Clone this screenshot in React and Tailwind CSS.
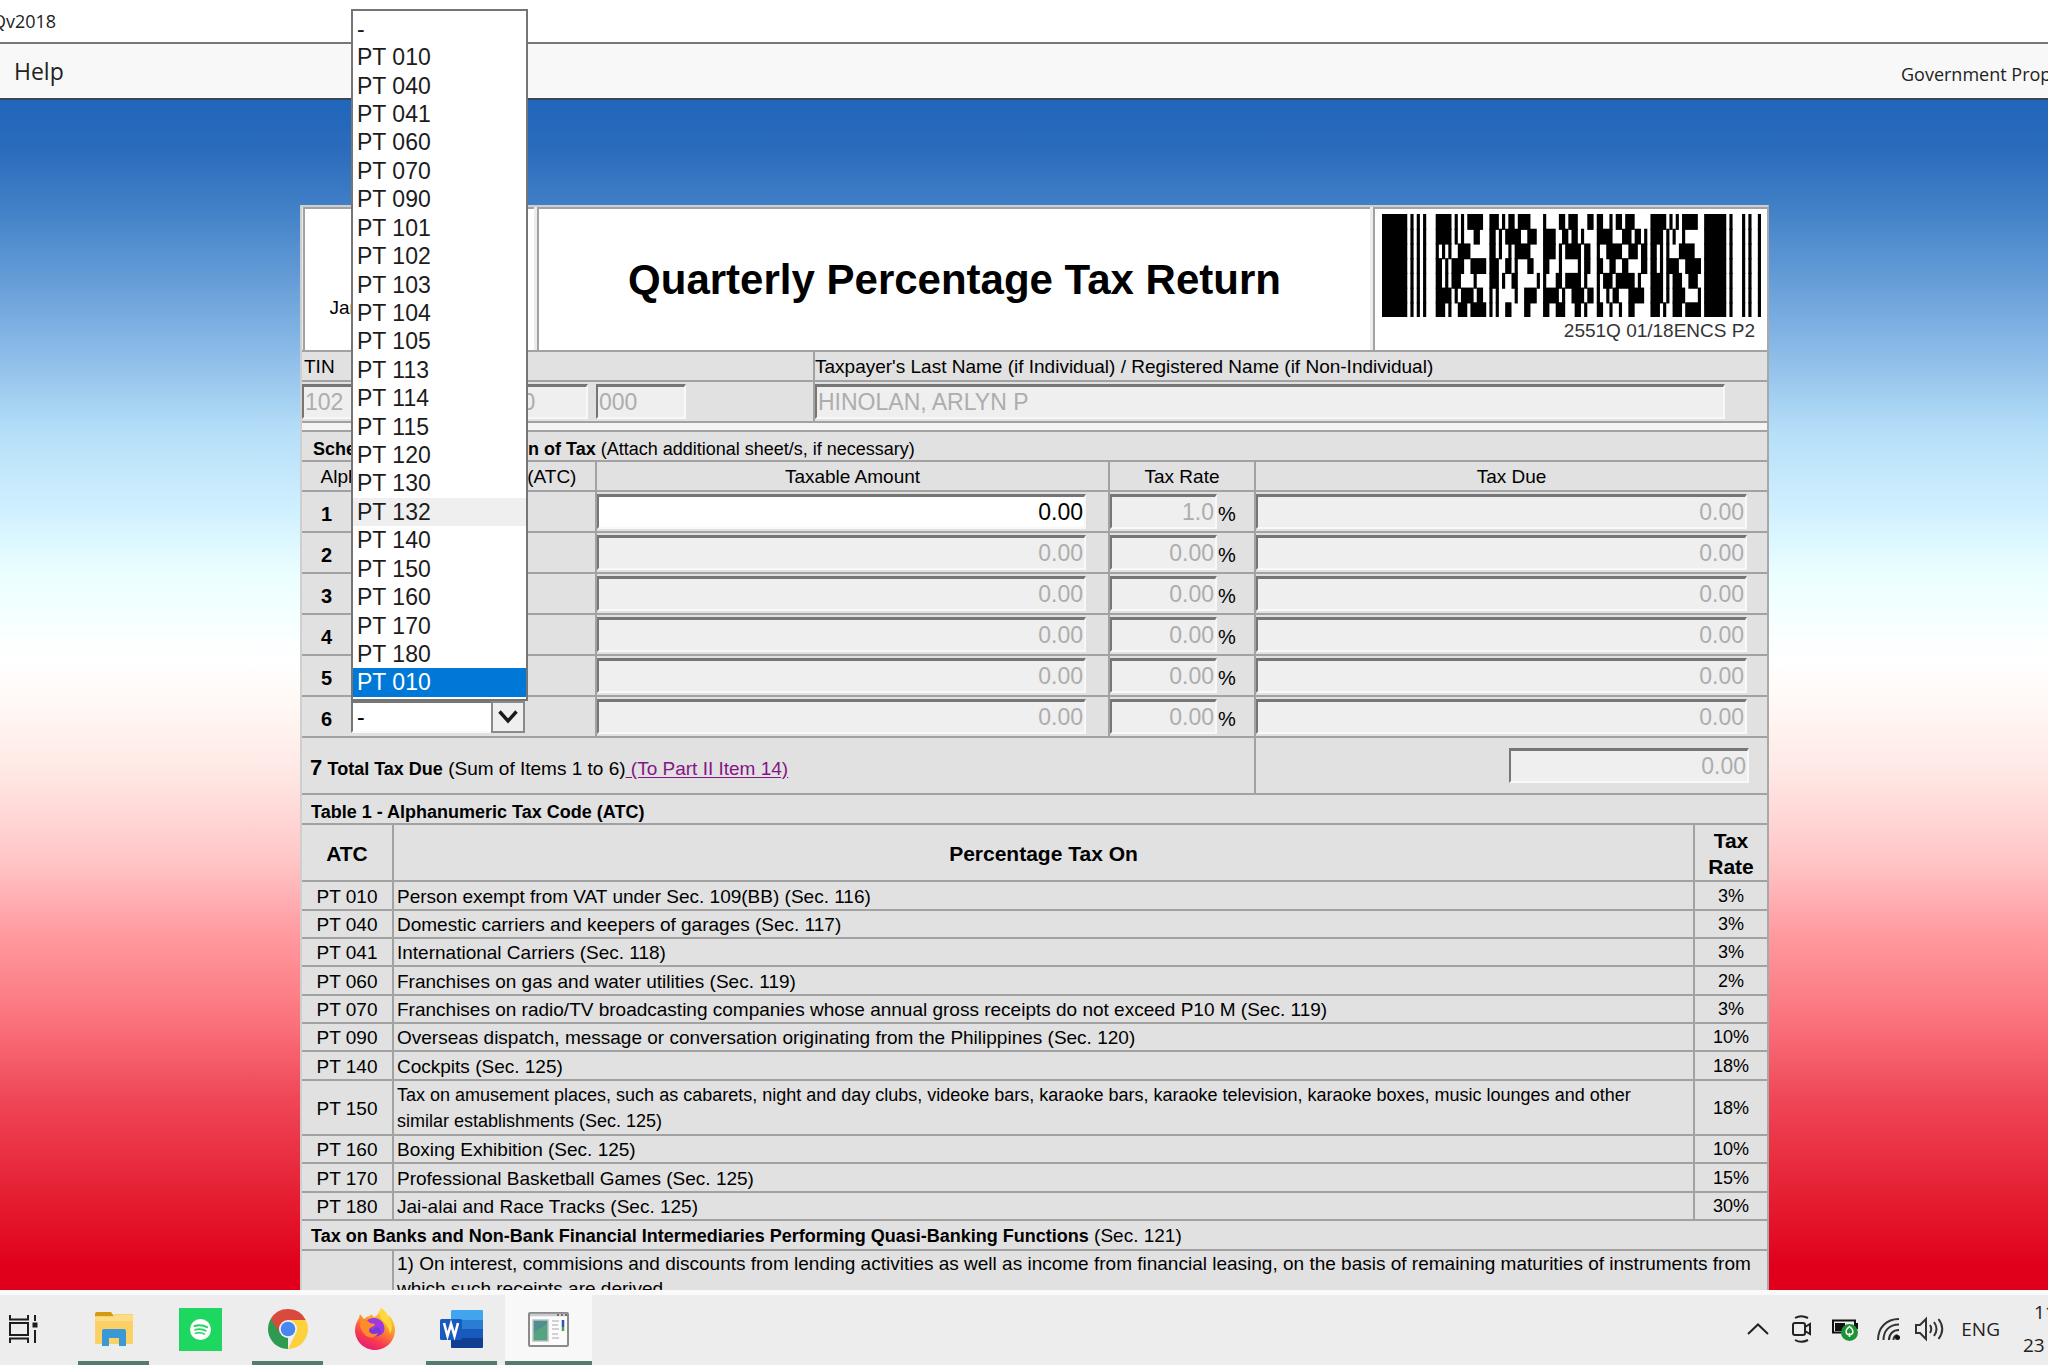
import React from "react";

const CODES = [
  "-", "PT 010", "PT 040", "PT 041", "PT 060", "PT 070", "PT 090", "PT 101", "PT 102", "PT 103", "PT 104", "PT 105",
  "PT 113", "PT 114", "PT 115", "PT 120", "PT 130", "PT 132", "PT 140", "PT 150", "PT 160", "PT 170", "PT 180", "PT 010",
];

const RATES = [
  ["PT 010", "Person exempt from VAT under Sec. 109(BB) (Sec. 116)", "3%"],
  ["PT 040", "Domestic carriers and keepers of garages (Sec. 117)", "3%"],
  ["PT 041", "International Carriers (Sec. 118)", "3%"],
  ["PT 060", "Franchises on gas and water utilities (Sec. 119)", "2%"],
  ["PT 070", "Franchises on radio/TV broadcasting companies whose annual gross receipts do not exceed P10 M (Sec. 119)", "3%"],
  ["PT 090", "Overseas dispatch, message or conversation originating from the Philippines (Sec. 120)", "10%"],
  ["PT 140", "Cockpits (Sec. 125)", "18%"],
  [
    "PT 150",
    <span className="text-[18px]">
      Tax on amusement places, such as cabarets, night and day clubs, videoke bars, karaoke bars, karaoke television, karaoke boxes, music lounges and other
      <br />
      similar establishments (Sec. 125)
    </span>,
    "18%",
  ],
  ["PT 160", "Boxing Exhibition (Sec. 125)", "10%"],
  ["PT 170", "Professional Basketball Games (Sec. 125)", "15%"],
  ["PT 180", "Jai-alai and Race Tracks (Sec. 125)", "30%"],
];

// PDF417 symbol: run lengths, alternating bar and space, for each of the seven rows.
const START = "81111113";
const STOP = "711311121";
const BARCODE = [
  ["51111152", "31112144", "14213321", "22112135", "51111152"],
  ["51111323", "21115232", "42212114", "53312111", "41111216"],
  ["11111246", "21121154", "41115122", "12523121", "21111353"],
  ["21114251", "32211323", "23151122", "22222421", "21114251"],
  ["21113414", "31122611", "13215113", "11316113", "41113232"],
  ["51114122", "11151242", "51124121", "12112352", "41114411"],
  ["31123151", "11122424", "22332113", "22121225", "31123151"],
];

function Barcode() {
  const bars = [];
  BARCODE.forEach((words, row) => {
    let x = 0;
    [START, ...words, STOP].forEach((word) => {
      word.split("").forEach((n, i) => {
        const w = Number(n);
        if (i % 2 === 0) bars.push(<rect key={row + "-" + x} x={x} y={row} width={w} height={row < 6 ? 1.08 : 1} />);
        x += w;
      });
    });
  });
  return (
    <svg viewBox="0 0 120 7" preserveAspectRatio="none" className="block h-[103px] w-full" fill="#000" role="img" aria-label="Form barcode">
      {bars}
    </svg>
  );
}

const field =
  "block h-[35px] rounded-none border-2 border-t-[3px] border-t-[#767676] border-l-[#767676] border-r-[#f8f8f8] border-b-[#f8f8f8] px-px text-[23px] leading-[28px] outline-none disabled:bg-[#efefef] disabled:text-[#adadad]";

const line = "border-b-2 border-[#a2a2a2]";
const cell = "border-b-2 border-l-2 border-[#a2a2a2] p-0";

function CodeSelect({ row, open }) {
  return (
    <div className="relative h-8 w-[174px]">
      <select
        aria-label={"Alphanumeric tax code " + row}
        defaultValue="-"
        className="block h-full w-full appearance-none border-2 border-t-[#767676] border-r-[#f8f8f8] border-b-[#f8f8f8] border-l-[#767676] bg-white pl-1 text-[23px] leading-[26px] outline-none"
      >
        <option>-</option>
        {CODES.slice(1, 23).map((c) => <option key={c}>{c}</option>)}
      </select>
      <span className="pointer-events-none absolute inset-y-0 right-0 flex w-[34px] items-center justify-center border-2 border-[#8a8a8a] bg-[#efefef]">
        <svg viewBox="0 0 20 14" className="h-[14px] w-5" fill="none" stroke="#1a1a1a" strokeWidth="3.4"><path d="M1.5 1.5 10 11l8.5-9.5" /></svg>
      </span>
      {open && (
        <ul
          role="listbox"
          aria-label="Tax codes"
          className="absolute bottom-full left-0 z-20 flex h-[692px] w-[177px] flex-col border-2 border-[#757575] bg-white pt-1 pb-0.5 text-[23px] leading-[26px] text-[#1c1c1c]"
        >
          {CODES.map((c, i) => (
            <li
              key={i}
              role="option"
              aria-selected={i === 23}
              className={
                "flex flex-1 items-center pl-1 " + (i === 23 ? "bg-[#0078d7] text-white" : i === 17 ? "bg-[#efefef]" : "")
              }
            >
              {c}
            </li>
          ))}
        </ul>
      )}
    </div>
  );
}

function Form() {
  return (
    <form className="mt-[105px] mr-[279px] ml-[300px] border-2 border-[#cfcfcf] border-r-[#a8a8a8] bg-[#e1e1e1] text-[19px] text-black">
      <header className={"grid h-[145px] grid-cols-[231px_1fr_394px] gap-[3px] bg-[#ececec] pl-px " + line}>
        <div className="flex flex-col items-center justify-end border-t-2 border-l-2 border-[#a2a2a2] bg-white pb-7">
          <span className="w-[180px]">January 2018</span>
        </div>
        <div className="flex items-center justify-center border-t-2 border-l-2 border-[#a2a2a2] bg-white">
          <h1 className="text-[42px] leading-[48px] font-bold">Quarterly Percentage Tax Return</h1>
        </div>
        <div className="border-t-2 border-l-2 border-[#a2a2a2] bg-white pt-[5px] pr-1.5 pl-[7px]">
          <Barcode />
          <p className="pr-1.5 text-right leading-[28px] text-[#333]">2551Q 01/18ENCS P2</p>
        </div>
      </header>

      <div className={"grid h-[30px] grid-cols-[511px_1fr] leading-[30px] " + line}>
        <label htmlFor="tin1" className="pl-0.5">TIN</label>
        <label htmlFor="payer" className="border-l-2 border-[#a2a2a2]">Taxpayer's Last Name (if Individual) / Registered Name (if Non-Individual)</label>
      </div>
      <div className={"grid h-[41px] grid-cols-[511px_1fr] " + line}>
        <div className="flex items-center gap-2">
          <input id="tin1" disabled defaultValue="102" className={field + " w-[88px]"} />
          <input aria-label="TIN part 2" disabled defaultValue="" className={field + " w-[88px]"} />
          <input aria-label="TIN part 3" disabled defaultValue="000" className={field + " w-[94px]"} />
          <input aria-label="TIN branch code" disabled defaultValue="000" className={field + " w-[90px]"} />
        </div>
        <div className="flex items-center border-l-2 border-[#a2a2a2] pr-[42px]">
          <input id="payer" disabled defaultValue="HINOLAN, ARLYN P" className={field + " w-full"} />
        </div>
      </div>
      <div className={"h-[9px] bg-[#f4f4f4] " + line} />
      <h2 className={"h-[30px] pl-[11px] text-[18px] leading-[34px] " + line}>
        <b>Schedule 1 – Computation of Tax</b> (Attach additional sheet/s, if necessary)
      </h2>

      <table className="w-full table-fixed border-separate border-spacing-0">
        <colgroup>
          <col className="w-[293px]" />
          <col />
          <col className="w-[146px]" />
          <col />
        </colgroup>
        <thead>
          <tr className="h-[30px] leading-[26px]">
            <th className={"p-0 pt-0.5 font-normal " + line}>Alphanumeric Tax Code (ATC)</th>
            <th className={cell + " pt-0.5 font-normal"}>Taxable Amount</th>
            <th className={cell + " pt-0.5 font-normal"}>Tax Rate</th>
            <th className={cell + " pt-0.5 font-normal"}>Tax Due</th>
          </tr>
        </thead>
        <tbody>
          {[1, 2, 3, 4, 5, 6].map((n) => (
            <tr key={n} className="h-[41px]">
              <td className={"p-0 " + line}>
                <div className="flex items-center">
                  <b className="w-[49px] pt-1 text-center text-[20px]">{n}</b>
                  <CodeSelect row={n} open={n === 6} />
                </div>
              </td>
              <td className={cell + " pr-[22px]"}>
                <input aria-label={"Taxable amount " + n} disabled={n > 1} defaultValue="0.00" className={field + " w-full bg-white text-right"} />
              </td>
              <td className={cell}>
                <div className="flex items-center gap-px">
                  <input aria-label={"Tax rate " + n} disabled defaultValue={n === 1 ? "1.0" : "0.00"} className={field + " w-[107px] text-right"} />
                  <span className="pt-1 text-[20px]">%</span>
                </div>
              </td>
              <td className={cell + " pr-5"}>
                <input aria-label={"Tax due " + n} disabled defaultValue="0.00" className={field + " w-full text-right"} />
              </td>
            </tr>
          ))}
          <tr className="h-[57px]">
            <td colSpan={3} className={"p-0 pt-1 pl-2 " + line}>
              <b className="text-[22px]">7</b> <b className="text-[18px]">Total Tax Due</b> (Sum of Items 1 to 6)
              <a href="#item14" className="text-[#851585] underline underline-offset-2"> (To Part II Item 14)</a>
            </td>
            <td className={cell + " pr-[18px]"}>
              <input aria-label="Total tax due" disabled defaultValue="0.00" className={field + " ml-auto w-[240px] text-right"} />
            </td>
          </tr>
        </tbody>
      </table>

      <h2 className={"h-[30px] pl-[9px] text-[18px] leading-[34px] font-bold " + line}>Table 1 - Alphanumeric Tax Code (ATC)</h2>
      <table className="w-full table-fixed border-separate border-spacing-0 leading-[25px]">
        <colgroup>
          <col className="w-[90px]" />
          <col />
          <col className="w-[74px]" />
        </colgroup>
        <thead>
          <tr className="h-[57px] text-[21px] leading-[26px]">
            <th className={"p-0 pt-0.5 " + line}>ATC</th>
            <th className={cell + " pt-0.5"}>Percentage Tax On</th>
            <th className={cell + " pt-0.5"}>Tax Rate</th>
          </tr>
        </thead>
        <tbody>
          {RATES.map(([code, text, rate]) => (
            <tr key={code} className="h-[28px] nth-[3n+1]:h-[29px]">
              <td className={"p-0 pt-px text-center " + line}>{code}</td>
              <td className={cell + " pt-px pl-[3px]"}>{text}</td>
              <td className={cell + " pt-px text-center text-[18px]"}>{rate}</td>
            </tr>
          ))}
          <tr className="h-[30px]">
            <td colSpan={3} className={"p-0 pt-0.5 pl-[9px] " + line}>
              <b className="text-[18px]">Tax on Banks and Non-Bank Financial Intermediaries Performing Quasi-Banking Functions</b> (Sec. 121)
            </td>
          </tr>
          <tr>
            <td className={"p-0 " + line} />
            <td colSpan={2} className={cell + " pl-[3px]"}>
              1) On interest, commisions and discounts from lending activities as well as income from financial leasing, on the basis of remaining maturities of instruments from which such receipts are derived
            </td>
          </tr>
        </tbody>
      </table>
    </form>
  );
}

function Folder() {
  return (
    <svg viewBox="0 0 40 36" className="h-9 w-10">
      <path d="M1 3q0-2 2-2h14l3 4H1z" fill="#d39b12" />
      <path d="M1 5h18l2-2h18v29q0 1-1 1H1z" fill="#fbd064" />
      <path d="M1 6h18l2-2h18v6H1z" fill="#fddc86" />
      <path d="M8 35V20q0-2 2-2h20q2 0 2 2v15h-7v-8H15v8z" fill="#3b98d6" />
    </svg>
  );
}

function Spotify() {
  return (
    <svg viewBox="0 0 43 43" className="h-[43px] w-[43px]">
      <path d="M0 0h43v43H0z" fill="#1ed760" />
      <circle cx="21.500" cy="21.500" r="10.500" fill="#fff" />
      <g fill="none" stroke="#1ed760" strokeLinecap="round" strokeWidth="2">
        <path d="M15.500 18q7-2 12.500 1.200" />
        <path d="M16 21.800q6-1.700 10.800 1" strokeWidth="1.700" />
        <path d="M16.500 25.300q5-1.300 9 .9" strokeWidth="1.500" />
      </g>
    </svg>
  );
}

function Chrome() {
  return (
    <svg viewBox="0 0 40 40" className="h-10 w-10">
      <path d="M20 20 20 40A20 20 0 0 1 2.700 10z" fill="#2f9b50" />
      <path d="M20 11h17.800a20 20 0 0 1-17.800 29l7.800-15.500z" fill="#fdd13e" />
      <path d="M20 11h17.800A20 20 0 0 0 2.700 10l9.500 14.500z" fill="#d84a3c" />
      <circle cx="20" cy="20" r="9" fill="#f1f1f1" />
      <circle cx="20" cy="20" r="7.300" fill="#4787f2" />
    </svg>
  );
}

function Firefox() {
  return (
    <svg viewBox="0 0 40 42" className="h-[42px] w-10">
      <defs>
        <linearGradient id="fx" x1="0.8" y1="0" x2="0.3" y2="1">
          <stop offset="0" stopColor="#ffe23a" />
          <stop offset="0.4" stopColor="#ff9a2c" />
          <stop offset="0.75" stopColor="#f9394f" />
          <stop offset="1" stopColor="#e31c77" />
        </linearGradient>
      </defs>
      <path d="M26 0c5 3 6 7 8 9l1-1c3 5 5 9 5 14 0 11-9 20-20 20S0 33 0 22c0-5 2-9 4-12l1-4 4 5c2-2 4-3 6-3l1-2 3 3c4-1 5-5 7-9z" fill="url(#fx)" />
      <circle cx="20.500" cy="21" r="7.500" fill="#7b38d8" />
      <path d="M14 11c5-2 11-1 14 4 3 6 1 10-2 12 1-4-1-7-5-8l-3 3-7-3c-1-4 0-6 3-8z" fill="#9a3ae0" />
      <path d="M5 12c4-1 8 0 10 3l5 1c0 3-6 3-6 6 0 4 5 5 9 3-2 5-9 6-13 2-4-5-6-9-5-15z" fill="#ff8b2b" />
      <path d="M26 0c5 3 6 7 8 9 3 6 4 12 1 17-1-7-4-10-8-14-3-4-3-8-1-12z" fill="#ffd93b" />
    </svg>
  );
}

function Word() {
  return (
    <svg viewBox="0 0 43 38" className="h-[38px] w-[43px]">
      <path d="M12 0h30q1 0 1 1v9H11V1z" fill="#41a5ee" />
      <path d="M11 10h32v9H11z" fill="#2b7cd3" />
      <path d="M11 19h32v9H11z" fill="#185abd" />
      <path d="M11 28h32v9q0 1-1 1H12q-1 0-1-1z" fill="#103f91" />
      <rect y="9" width="22" height="21" rx="1.500" fill="#185abd" />
      <path d="m4 13 3.500 13L11 14l3.500 12L18 13" fill="none" stroke="#fff" strokeWidth="2.600" />
    </svg>
  );
}

function FormApp() {
  return (
    <svg viewBox="0 0 41 35" className="h-[35px] w-[41px]">
      <rect x="1" y="1" width="39" height="33" rx="1" fill="#fbfbfb" stroke="#8b8b8b" strokeWidth="2" />
      <path d="M2 3h37" stroke="#c9c9d2" strokeWidth="2.500" />
      <path d="M29 3h2m2 0h2m2 0h2" stroke="#555" strokeWidth="1.500" />
      <rect x="5" y="8" width="15" height="21" fill="#4f8f8f" stroke="#b9c3c3" strokeWidth="1.500" />
      <path d="M6 20l13-8v16H6z" fill="#56a380" />
      <path d="M24 9h7m-7 4h6m-6 4h7m-7 5h6m-6 4h7" stroke="#c4c4c4" strokeWidth="1.500" />
      <path d="M35 8v7" stroke="#3553b5" strokeWidth="2.500" />
      <path d="M35 15v4" stroke="#4ba05d" strokeWidth="2.500" />
    </svg>
  );
}

const APPS = [
  ["File Explorer", Folder, true],
  ["Spotify", Spotify, false],
  ["Chrome", Chrome, true],
  ["Firefox", Firefox, false],
  ["Word", Word, true],
  ["eBIRForms", FormApp, true],
];

function Taskbar() {
  return (
    <footer className="relative z-10 flex h-[75px] shrink-0 overflow-hidden border-t-[5px] border-[#fafafa] bg-[#ededed] text-[#222]">
      <button type="button" aria-label="Task view" className="flex w-[70px] items-center pb-0.5 pl-[9px]">
        <svg viewBox="0 0 30 28" className="h-7 w-[30px]" fill="none" stroke="#1d1d1d" strokeWidth="2">
          <path d="M1 0v4.500h18V0M1 28v-4.500h18V28" />
          <rect x="1" y="8" width="18" height="12" />
          <path d="M26 0v6M26 15v13" />
          <path d="M23.500 7.500h5v5h-5z" fill="#1d1d1d" stroke="none" />
        </svg>
      </button>
      {APPS.map(([name, Icon, running], i) => (
        <button
          key={name}
          type="button"
          aria-label={name}
          className={"relative flex w-[87px] items-center justify-center pb-0.5 " + (i === 5 ? "bg-[#f8f8f8]" : "")}
        >
          <Icon />
          {running && <span className={"absolute bottom-0 h-1 bg-[#557a70] " + (i === 5 ? "inset-x-0" : "inset-x-2")} />}
        </button>
      ))}
      <div className="ml-auto flex items-center pb-0.5 font-['Open_Sans',sans-serif] text-[19px]">
        <button type="button" aria-label="Show hidden icons" className="mr-[23px]">
          <svg viewBox="0 0 22 12" className="h-3 w-[22px]" fill="none" stroke="#222" strokeWidth="2"><path d="m1 11 10-9.500L21 11" /></svg>
        </button>
        <svg viewBox="0 0 20 28" className="mr-[19px] h-7 w-5" fill="none" stroke="#222" strokeWidth="2">
          <rect x="1" y="8" width="12" height="12" rx="2" />
          <path d="m13 12 5-3v10l-5-3M3 3q6-3.500 13 0M3 25q6 3.500 13 0" />
        </svg>
        <svg viewBox="0 0 28 24" className="mr-[18px] h-6 w-7">
          <path d="M2 3.500h22v12H2z" fill="none" stroke="#111" strokeWidth="2" />
          <path d="M4 6h10v8H4zM25 6h2v6h-2z" fill="#111" />
          <circle cx="18.500" cy="15.500" r="8.500" fill="#1d9433" />
          <path d="M18.500 20v-4M18.500 9.500c-5 4-4 8 0 8.500 4-.5 5-4.500 0-8.500z" fill="none" stroke="#fff" strokeWidth="1.500" />
        </svg>
        <svg viewBox="0 0 24 24" className="mr-[14px] h-6 w-6" fill="none" stroke="#333" strokeWidth="2">
          <path d="M1 23C1 11 9 2 22 2M6.500 23C6.500 14 12 7.500 22 7.500M12 23c0-6 4-10 10-10" />
          <path d="M16.500 23q0-4 4-5" />
          <circle cx="20.500" cy="20.500" r="2.500" fill="#111" stroke="none" />
        </svg>
        <svg viewBox="0 0 30 26" className="mr-[16px] h-[26px] w-[30px]" fill="none" stroke="#333" strokeWidth="2">
          <path d="M1 9h4l6-6v20l-6-6H1z" />
          <path d="M15 9q2.500 4 0 8M19 6q5 7 0 14M23.500 3q7.500 10 0 20" />
        </svg>
        <span className="mr-[23px]">ENG</span>
        <span className="w-[25px] overflow-hidden leading-[33px] whitespace-nowrap">
          <span className="block pl-[11px]">11</span>
          <span className="block">23</span>
        </span>
      </div>
    </footer>
  );
}

export default function App() {
  return (
    <div className="flex h-screen flex-col overflow-hidden bg-white font-['Liberation_Sans',Arial,sans-serif]">
      <div className="flex h-[44px] shrink-0 items-center overflow-hidden border-b-2 border-[#777] bg-white font-['Open_Sans',sans-serif] text-[18px] text-[#222]">
        <span className="-ml-2">Qv2018</span>
      </div>
      <nav className="flex h-[56px] shrink-0 items-center justify-between overflow-hidden border-b-2 border-[#3a4656] bg-[#f8f8f8] font-['Open_Sans',sans-serif] text-[#222]">
        <button type="button" className="pl-[14px] text-[23px]">Help</button>
        <span className="w-[147px] overflow-hidden pt-1.5 text-[18px] whitespace-nowrap">Government Prop</span>
      </nav>
      <main className="min-h-0 flex-1 bg-[linear-gradient(180deg,#2066bb_0%,#2a6bbc_4%,#4180c6_9%,#659cd7_15%,#90bfea_22%,#b6dff8_28%,#d2f1ff_35%,#ebffff_40%,#ffffff_47%,#fff8f4_51%,#ffe6e3_57%,#ffc5c6_64%,#ff9ba0_70%,#fb757e_77%,#ef4656_84%,#e62437_91%,#e1001c_98%,#e1001c_100%)]">
        <div className="flow-root">
          <Form />
        </div>
      </main>
      <Taskbar />
    </div>
  );
}
